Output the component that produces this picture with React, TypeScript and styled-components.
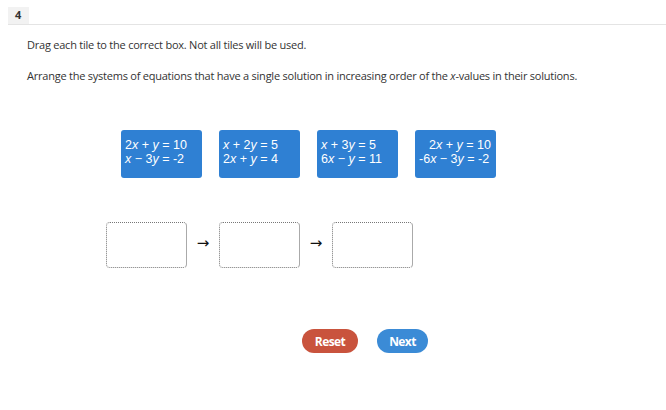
import React from "react";
import styled, { createGlobalStyle } from "styled-components";

const Global = createGlobalStyle`
  html, body { margin: 0; padding: 0; background: #fff; }
  body { font-family: "Open Sans", "Liberation Sans", sans-serif; color: #333; }
`;

const Page = styled.div`
  width: 666px;
  height: 410px;
  overflow: hidden;
`;

const Header = styled.div`
  margin-left: 8px;
  padding-top: 7px;
  border-bottom: 1px solid #e4e4e4;
  display: flex;
`;

const Badge = styled.div`
  width: 21px;
  height: 17px;
  background: #f2f2f2;
  font-size: 11px;
  font-weight: 700;
  line-height: 15px;
  padding-left: 7px;
  box-sizing: border-box;
  color: #333;
`;

const Body = styled.div`
  padding-left: 27px;
`;

const Instruction = styled.p<{ $top: number }>`
  margin: ${(p) => p.$top}px 0 0 0;
  font-size: 11px;
  line-height: 14px;
  color: #333;
  letter-spacing: -0.23px;
`;

const TileRow = styled.div`
  display: flex;
  gap: 17px;
  margin: 47px 0 0 94px;
`;

const Tile = styled.div`
  width: 81px;
  height: 48px;
  box-sizing: border-box;
  background: #2f80d3;
  border-radius: 3px;
  color: #fff;
  font-family: "Liberation Sans", Arial, sans-serif;
  font-size: 12.5px;
  line-height: 14px;
  padding: 8px 0 0 4px;
  white-space: nowrap;
`;

const Line = styled.div<{ $indent?: number }>`
  padding-left: ${(p) => p.$indent ?? 0}px;
  i { font-style: italic; }
`;

const DropRow = styled.div`
  display: flex;
  align-items: center;
  margin: 44px 0 0 79px;
`;

const DropBox = styled.div`
  width: 81px;
  height: 46px;
  box-sizing: border-box;
  border: 1px dotted #777;
  border-right: 1px solid #aaa;
  border-radius: 4px;
  background: #fff;
`;

const Arrow = styled.div`
  width: 32px;
  text-align: center;
  font-family: "DejaVu Sans", sans-serif;
  font-size: 15px;
  line-height: 15px;
  color: #111;
  margin-top: -4px;
`;

const ButtonRow = styled.div`
  display: flex;
  gap: 19px;
  margin: 61px 0 0 275px;
`;

const Button = styled.button<{ $color: string; $w: number }>`
  width: ${(p) => p.$w}px;
  height: 24px;
  border: none;
  border-radius: 12px;
  background: ${(p) => p.$color};
  color: #fff;
  font-family: "Open Sans", "Liberation Sans", sans-serif;
  font-weight: 700;
  font-size: 12px;
  letter-spacing: -0.6px;
  padding: 0;
  cursor: pointer;
`;

const tiles: Array<[React.ReactNode, React.ReactNode, number?]> = [
  [<>2<i>x</i> + <i>y</i> = 10</>, <><i>x</i> − 3<i>y</i> = -2</>],
  [<><i>x</i> + 2<i>y</i> = 5</>, <>2<i>x</i> + <i>y</i> = 4</>],
  [<><i>x</i> + 3<i>y</i> = 5</>, <>6<i>x</i> − <i>y</i> = 11</>],
  [<>2<i>x</i> + <i>y</i> = 10</>, <>-6<i>x</i> − 3<i>y</i> = -2</>, 10],
];

export default function App() {
  return (
    <Page>
      <Global />
      <Header>
        <Badge>4</Badge>
      </Header>
      <Body>
        <Instruction $top={13}>Drag each tile to the correct box. Not all tiles will be used.</Instruction>
        <Instruction $top={17}>
          Arrange the systems of equations that have a single solution in increasing order of the <i>x</i>-values in their solutions.
        </Instruction>
        <TileRow>
          {tiles.map(([a, b, indent], i) => (
            <Tile key={i}>
              <Line $indent={indent}>{a}</Line>
              <Line>{b}</Line>
            </Tile>
          ))}
        </TileRow>
        <DropRow>
          <DropBox />
          <Arrow>→</Arrow>
          <DropBox />
          <Arrow>→</Arrow>
          <DropBox />
        </DropRow>
        <ButtonRow>
          <Button $color="#c9533d" $w={56}>Reset</Button>
          <Button $color="#3b8bd6" $w={51}>Next</Button>
        </ButtonRow>
      </Body>
    </Page>
  );
}
